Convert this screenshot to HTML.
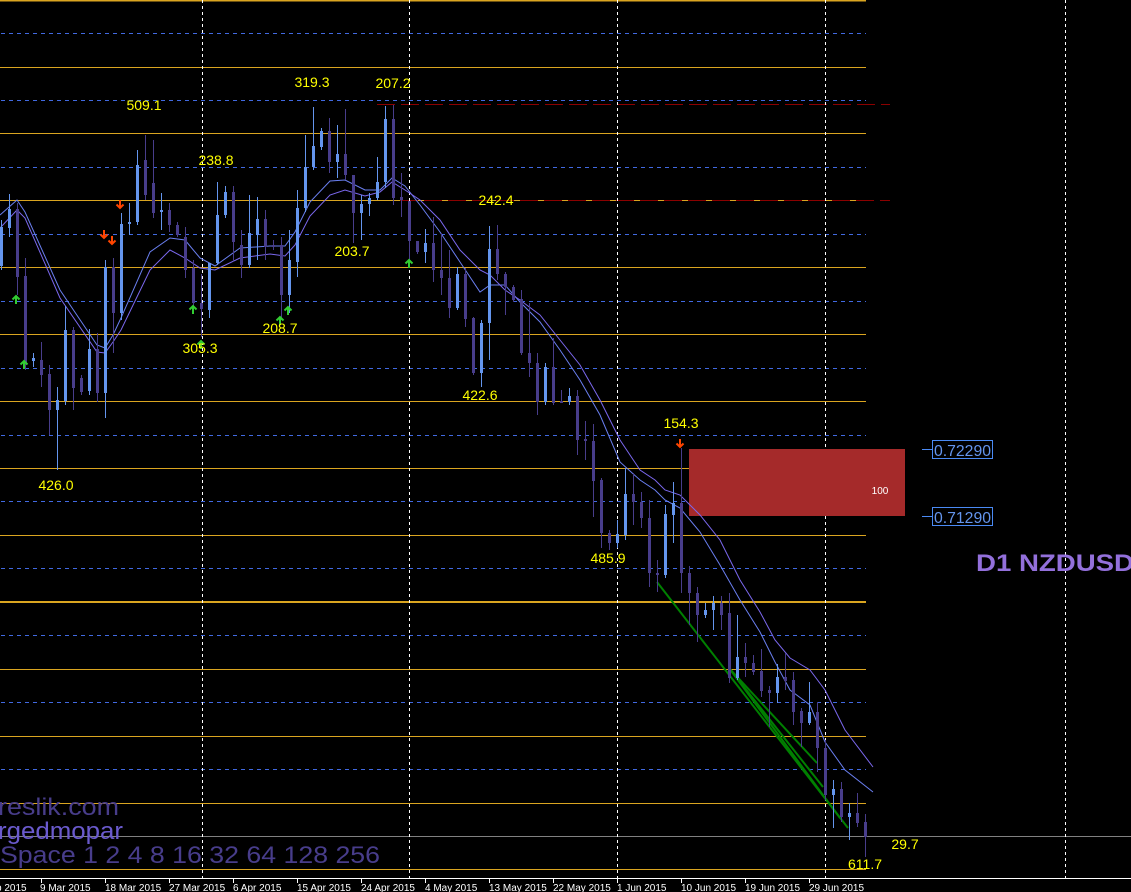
<!DOCTYPE html>
<html><head><meta charset="utf-8"><style>
html,body{margin:0;padding:0;background:#000;width:1131px;height:892px;overflow:hidden;font-family:"Liberation Sans",sans-serif}
</style></head><body>
<svg width="1131" height="892" style="position:absolute;left:0;top:0" xmlns="http://www.w3.org/2000/svg">
<g stroke="#daa520" stroke-width="1">
<line x1="0" y1="0.5" x2="866" y2="0.5" stroke-width="2"/>
<line x1="0" y1="67.5" x2="866" y2="67.5"/><line x1="0" y1="133.5" x2="866" y2="133.5"/>
<line x1="0" y1="200.5" x2="866" y2="200.5"/><line x1="0" y1="267.5" x2="866" y2="267.5"/>
<line x1="0" y1="334.5" x2="866" y2="334.5"/><line x1="0" y1="401.5" x2="866" y2="401.5"/>
<line x1="0" y1="468.5" x2="866" y2="468.5"/><line x1="0" y1="535.5" x2="866" y2="535.5"/>
<line x1="0" y1="602" x2="866" y2="602" stroke-width="2"/><line x1="0" y1="669.5" x2="866" y2="669.5"/>
<line x1="0" y1="736.5" x2="866" y2="736.5"/><line x1="0" y1="803.5" x2="866" y2="803.5"/>
<line x1="0" y1="869.5" x2="866" y2="869.5"/>
</g>
<g stroke="#4169e1" stroke-dasharray="4 4">
<line x1="1" y1="33.5" x2="866" y2="33.5"/><line x1="1" y1="100.5" x2="866" y2="100.5"/>
<line x1="1" y1="167.5" x2="866" y2="167.5"/><line x1="1" y1="234.5" x2="866" y2="234.5"/>
<line x1="1" y1="301.5" x2="866" y2="301.5"/><line x1="1" y1="368.5" x2="866" y2="368.5"/>
<line x1="1" y1="435.5" x2="866" y2="435.5"/><line x1="1" y1="501.5" x2="866" y2="501.5"/>
<line x1="1" y1="568.5" x2="866" y2="568.5"/><line x1="1" y1="635.5" x2="866" y2="635.5"/>
<line x1="1" y1="702.5" x2="866" y2="702.5"/><line x1="1" y1="769.5" x2="866" y2="769.5"/>
</g>
<line x1="0" y1="836.5" x2="1131" y2="836.5" stroke="#808080"/>
<g stroke="#8b0000" stroke-width="1" stroke-dasharray="18 6">
<line x1="377" y1="104.5" x2="890" y2="104.5"/><line x1="400" y1="200.5" x2="890" y2="200.5"/>
</g>
<g stroke="#fff" stroke-dasharray="3 3">
<line x1="202.5" y1="0" x2="202.5" y2="878"/><line x1="409.5" y1="0" x2="409.5" y2="878"/>
<line x1="617.5" y1="0" x2="617.5" y2="878"/><line x1="825.5" y1="0" x2="825.5" y2="878"/>
<line x1="1065.5" y1="0" x2="1065.5" y2="878"/>
</g>
<rect x="689" y="449" width="216" height="67" fill="#a52a2a"/>
<polyline fill="none" stroke="#6a7ff0" points="0,215 17,200 25,212 60,290 97,345 105,348 113,335 121,318 150,252 170,238 185,240 200,258 215,266 240,248 270,246 285,246 295,232 310,202 330,181 345,180 365,190 380,190 392,178 405,186 420,205 440,232 460,262 480,292 490,285 505,285 520,302 540,322 560,350 580,380 600,415 620,462 640,480 655,490 665,500 680,508 700,532 720,565 740,600 760,632 775,662 790,690 810,705 825,742 845,770 873,792"/>
<polyline fill="none" stroke="#7b68ee" points="0,228 17,210 25,218 60,298 97,352 105,353 113,342 121,330 150,270 170,250 185,258 200,268 215,270 240,258 270,254 285,256 295,245 310,216 330,195 345,190 365,196 380,192 392,182 405,190 420,200 440,220 460,250 480,270 490,275 505,290 520,300 540,315 560,340 580,365 600,400 620,440 640,470 655,480 665,490 680,495 700,515 720,540 740,580 760,612 775,640 790,658 810,670 825,690 845,730 873,767"/>
<g stroke="#008000" stroke-width="2">
<line x1="657" y1="582" x2="848" y2="828"/><line x1="729" y1="668" x2="817" y2="763"/>
<line x1="729" y1="668" x2="823" y2="787"/><line x1="729" y1="668" x2="840" y2="818"/>
</g>
<g fill="#6495ed" stroke="#6495ed">
<path d="M1.5 220V270M9.5 194V237M33.5 353V367M57.5 387V470M65.5 306V405M89.5 329V395M105.5 260V418M121.5 213V320M129.5 203V235M137.5 150V225M161.5 193V230M209.5 263V318M217.5 182V265M225.5 186V218M249.5 195V268M257.5 197V260M289.5 230V313M297.5 190V277M305.5 135V212M313.5 107V170M321.5 128V150M337.5 125V178M361.5 195V240M369.5 193V216M377.5 157V200M385.5 106V188M425.5 229V263M457.5 267V310M481.5 320V387M489.5 226V360M545.5 363V405M569.5 388V405M617.5 520V548M625.5 468V540M665.5 505V578M673.5 482V543M705.5 603V618M713.5 596V630M737.5 615V680M777.5 664V703M809.5 682V725M833.5 780V828M849.5 803V840" fill="none"/>
<g stroke="none">
<rect x="0" y="227" width="3" height="39"/><rect x="8" y="209" width="3" height="19"/><rect x="32" y="358" width="3" height="3"/><rect x="56" y="400" width="3" height="10"/><rect x="64" y="330" width="3" height="71"/><rect x="88" y="349" width="3" height="42"/><rect x="104" y="267" width="3" height="126"/><rect x="120" y="224" width="3" height="89"/><rect x="128" y="222" width="3" height="2"/><rect x="136" y="165" width="3" height="57"/><rect x="160" y="210" width="3" height="2"/><rect x="208" y="263" width="3" height="47"/><rect x="216" y="215" width="3" height="48"/><rect x="224" y="192" width="3" height="23"/><rect x="248" y="233" width="3" height="32"/><rect x="256" y="219" width="3" height="16"/><rect x="288" y="260" width="3" height="35"/><rect x="296" y="208" width="3" height="54"/><rect x="304" y="167" width="3" height="41"/><rect x="312" y="146" width="3" height="21"/><rect x="320" y="131" width="3" height="16"/><rect x="336" y="154" width="3" height="8"/><rect x="360" y="204" width="3" height="9"/><rect x="368" y="198" width="3" height="6"/><rect x="376" y="182" width="3" height="16"/><rect x="384" y="119" width="3" height="63"/><rect x="424" y="243" width="3" height="9"/><rect x="456" y="274" width="3" height="34"/><rect x="480" y="323" width="3" height="50"/><rect x="488" y="249" width="3" height="74"/><rect x="544" y="367" width="3" height="35"/><rect x="568" y="396" width="3" height="6"/><rect x="616" y="534" width="3" height="9"/><rect x="624" y="494" width="3" height="41"/><rect x="664" y="514" width="3" height="61"/><rect x="672" y="503" width="3" height="12"/><rect x="704" y="610" width="3" height="5"/><rect x="712" y="603" width="3" height="7"/><rect x="736" y="657" width="3" height="21"/><rect x="776" y="677" width="3" height="16"/><rect x="808" y="712" width="3" height="11"/><rect x="832" y="789" width="3" height="6"/><rect x="848" y="813" width="3" height="4"/>
</g></g>
<g fill="#483d8b" stroke="#483d8b">
<path d="M17.5 203V295M25.5 258V370M41.5 342V387M49.5 365V435M73.5 327V410M81.5 375V395M97.5 333V402M113.5 258V353M145.5 135V200M153.5 140V218M169.5 203V232M177.5 222V237M185.5 227V278M193.5 260V310M201.5 274V337M233.5 186V262M241.5 230V278M265.5 210V260M273.5 240V250M281.5 237V320M329.5 118V173M345.5 109V180M353.5 175V243M393.5 105V205M401.5 173V217M409.5 201V268M417.5 241V254M433.5 217V282M441.5 233V295M449.5 250V318M465.5 268V327M473.5 317V375M497.5 225V280M505.5 272V315M513.5 285V302M521.5 290V355M529.5 303V377M537.5 353V415M553.5 338V405M561.5 390V403M577.5 390V455M585.5 421V460M593.5 424V517M601.5 478V548M609.5 530V550M633.5 473V525M641.5 492V528M649.5 500V587M657.5 560V592M681.5 448V593M689.5 566V625M697.5 587V642M721.5 596V630M729.5 593V683M745.5 643V677M753.5 655V675M761.5 649V697M769.5 686V727M785.5 653V690M793.5 672V725M801.5 708V747M817.5 702V772M825.5 740V800M841.5 782V822M857.5 793V827M865.5 814V857" fill="none"/>
<g stroke="none">
<rect x="16" y="209" width="3" height="68"/><rect x="24" y="276" width="3" height="89"/><rect x="40" y="360" width="3" height="15"/><rect x="48" y="374" width="3" height="36"/><rect x="72" y="330" width="3" height="58"/><rect x="80" y="378" width="3" height="14"/><rect x="96" y="349" width="3" height="44"/><rect x="112" y="267" width="3" height="46"/><rect x="144" y="160" width="3" height="35"/><rect x="152" y="183" width="3" height="30"/><rect x="168" y="210" width="3" height="15"/><rect x="176" y="225" width="3" height="10"/><rect x="184" y="237" width="3" height="33"/><rect x="192" y="268" width="3" height="35"/><rect x="200" y="303" width="3" height="6"/><rect x="232" y="192" width="3" height="50"/><rect x="240" y="245" width="3" height="20"/><rect x="264" y="219" width="3" height="28"/><rect x="272" y="245" width="3" height="2"/><rect x="280" y="245" width="3" height="50"/><rect x="328" y="131" width="3" height="31"/><rect x="344" y="154" width="3" height="21"/><rect x="352" y="175" width="3" height="38"/><rect x="392" y="119" width="3" height="79"/><rect x="400" y="197" width="3" height="3"/><rect x="408" y="201" width="3" height="40"/><rect x="416" y="241" width="3" height="11"/><rect x="432" y="243" width="3" height="27"/><rect x="440" y="270" width="3" height="8"/><rect x="448" y="278" width="3" height="30"/><rect x="464" y="274" width="3" height="45"/><rect x="472" y="318" width="3" height="55"/><rect x="496" y="249" width="3" height="25"/><rect x="504" y="274" width="3" height="13"/><rect x="512" y="287" width="3" height="13"/><rect x="520" y="299" width="3" height="54"/><rect x="528" y="353" width="3" height="10"/><rect x="536" y="363" width="3" height="39"/><rect x="552" y="367" width="3" height="36"/><rect x="560" y="401" width="3" height="2"/><rect x="576" y="396" width="3" height="44"/><rect x="584" y="439" width="3" height="2"/><rect x="592" y="441" width="3" height="40"/><rect x="600" y="480" width="3" height="53"/><rect x="608" y="533" width="3" height="10"/><rect x="632" y="494" width="3" height="8"/><rect x="640" y="502" width="3" height="16"/><rect x="648" y="518" width="3" height="55"/><rect x="656" y="573" width="3" height="2"/><rect x="680" y="503" width="3" height="70"/><rect x="688" y="573" width="3" height="20"/><rect x="696" y="593" width="3" height="22"/><rect x="720" y="603" width="3" height="12"/><rect x="728" y="613" width="3" height="65"/><rect x="744" y="657" width="3" height="6"/><rect x="752" y="663" width="3" height="9"/><rect x="760" y="671" width="3" height="20"/><rect x="768" y="690" width="3" height="3"/><rect x="784" y="677" width="3" height="4"/><rect x="792" y="680" width="3" height="32"/><rect x="800" y="711" width="3" height="12"/><rect x="816" y="712" width="3" height="36"/><rect x="824" y="748" width="3" height="47"/><rect x="840" y="789" width="3" height="28"/><rect x="856" y="813" width="3" height="10"/><rect x="864" y="822" width="3" height="15"/>
</g></g>
<g stroke="#32cd32" stroke-width="2" fill="none">
<path d="M16 304V296M12.5 299.5L16 296L19.5 299.5"/><path d="M24 369V361M20.5 364.5L24 361L27.5 364.5"/>
<path d="M193 314V306M189.5 309.5L193 306L196.5 309.5"/><path d="M201 349V341M197.5 344.5L201 341L204.5 344.5"/>
<path d="M280 325V317M276.5 320.5L280 317L283.5 320.5"/><path d="M288 315V307M284.5 310.5L288 307L291.5 310.5"/>
<path d="M409 268V260M405.5 263.5L409 260L412.5 263.5"/>
</g>
<g stroke="#ff4500" stroke-width="2" fill="none">
<path d="M120 200V208M116.5 204.5L120 208L123.5 204.5"/><path d="M104 230V238M100.5 234.5L104 238L107.5 234.5"/>
<path d="M112 236V244M108.5 240.5L112 244L115.5 240.5"/><path d="M680 439V447M676.5 443.5L680 447L683.5 443.5"/>
</g>
<g stroke="#4a8af4" fill="none">
<line x1="922" y1="449.5" x2="932" y2="449.5"/><rect x="932.5" y="440.5" width="60" height="18"/>
<line x1="922" y1="516.5" x2="932" y2="516.5"/><rect x="932.5" y="507.5" width="60" height="18"/>
</g>
<line x1="0" y1="878.5" x2="1131" y2="878.5" stroke="#fff"/>
<g stroke="#fff"><path d="M41.5 878V883M105.5 878V883M169.5 878V883M233.5 878V883M297.5 878V883M361.5 878V883M425.5 878V883M489.5 878V883M553.5 878V883M617.5 878V883M681.5 878V883M745.5 878V883M809.5 878V883"/></g>
<g fill="#ffff00" font-family="Liberation Sans, sans-serif" font-size="14" text-anchor="middle">
<text x="144" y="110">509.1</text><text x="216" y="165">238.8</text><text x="312" y="87">319.3</text><text x="393" y="88">207.2</text>
<text x="496" y="205">242.4</text><text x="352" y="256">203.7</text><text x="280" y="333">208.7</text><text x="200" y="353">305.3</text>
<text x="56" y="490">426.0</text><text x="480" y="400">422.6</text><text x="681" y="428">154.3</text><text x="608" y="563">485.9</text>
<text x="905" y="849">29.7</text><text x="865" y="869">611.7</text>
</g>
<text x="880" y="494" fill="#fff" font-size="10" text-anchor="middle" font-family="Liberation Sans, sans-serif">100</text>
<g fill="#6495ed" font-family="Liberation Sans, sans-serif" font-size="16">
<text x="934" y="456" textLength="57" lengthAdjust="spacingAndGlyphs">0.72290</text><text x="934" y="523" textLength="57" lengthAdjust="spacingAndGlyphs">0.71290</text>
</g>
<text x="976" y="571" fill="#9370db" font-weight="bold" font-size="24" font-family="Liberation Sans, sans-serif" textLength="158" lengthAdjust="spacingAndGlyphs">D1 NZDUSD</text>
<g font-family="Liberation Sans, sans-serif" font-size="24">
<text x="-2" y="815" fill="#483d8b" textLength="121" lengthAdjust="spacingAndGlyphs">reslik.com</text>
<text x="-2" y="839" fill="#6a5acd" textLength="125" lengthAdjust="spacingAndGlyphs">rgedmopar</text>
<text x="0" y="863" fill="#483d8b" textLength="380" lengthAdjust="spacingAndGlyphs">Space 1 2 4 8 16 32 64 128 256</text>
</g>
<g fill="#fff" font-family="Liberation Sans, sans-serif" font-size="10">
<text x="-4" y="891">b 2015</text><text x="40" y="891">9 Mar 2015</text><text x="105" y="891">18 Mar 2015</text><text x="169" y="891">27 Mar 2015</text>
<text x="233" y="891">6 Apr 2015</text><text x="297" y="891">15 Apr 2015</text><text x="361" y="891">24 Apr 2015</text><text x="425" y="891">4 May 2015</text>
<text x="489" y="891">13 May 2015</text><text x="553" y="891">22 May 2015</text><text x="617" y="891">1 Jun 2015</text><text x="681" y="891">10 Jun 2015</text>
<text x="745" y="891">19 Jun 2015</text><text x="809" y="891">29 Jun 2015</text>
</g>
</svg>
</body></html>
